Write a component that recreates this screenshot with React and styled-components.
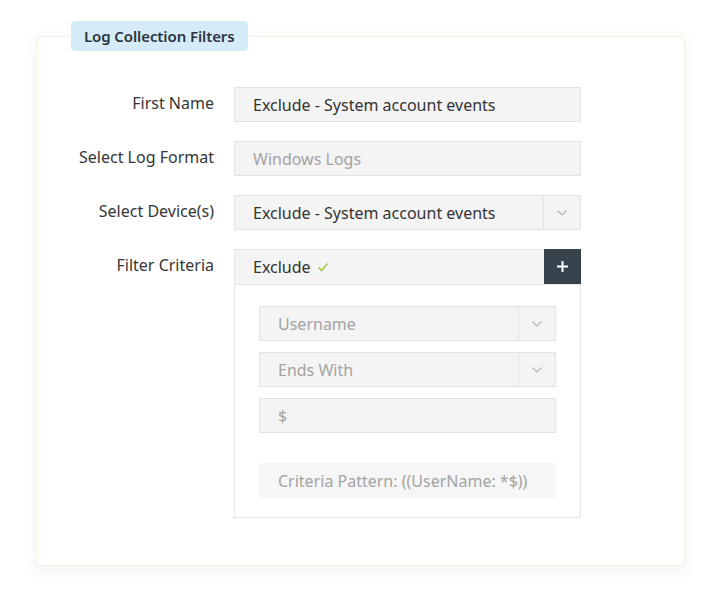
import React from 'react';
import styled, { createGlobalStyle } from 'styled-components';

const GlobalStyle = createGlobalStyle`
  html, body {
    margin: 0;
    padding: 0;
    background: #ffffff;
    font-family: 'Noto Sans', 'Open Sans', sans-serif;
  }
`;

const Page = styled.div`
  width: 720px;
  height: 602px;
  padding: 36px 0 0 36px;
  box-sizing: border-box;
`;

const Card = styled.section`
  position: relative;
  width: 649px;
  height: 530px;
  box-sizing: border-box;
  border: 1px solid #f7f1e2;
  border-radius: 3px;
  background: #fff;
  box-shadow: 0 4px 14px rgba(190, 185, 220, 0.22);
  padding: 50px 0 0 23px;
`;

const Badge = styled.div`
  position: absolute;
  top: -16px;
  left: 34px;
  height: 30px;
  padding: 0 13px;
  display: flex;
  align-items: center;
  background: #d5ebf8;
  border-radius: 4px;
  color: #2c3440;
  font-size: 15px;
  font-weight: 600;
  letter-spacing: -0.1px;
`;

const Form = styled.div`
  display: grid;
  grid-template-columns: 154px 347px;
  column-gap: 20px;
  row-gap: 19px;
  align-items: start;
`;

const Label = styled.label`
  text-align: right;
  font-size: 16px;
  color: #363636;
  line-height: 33px;
`;

const Field = styled.div`
  display: flex;
  align-items: stretch;
  height: 35px;
  box-sizing: border-box;
  background: ${(p) => (p.$flat ? '#f6f6f6' : '#f4f4f4')};
  border: 1px solid ${(p) => (p.$flat ? '#f6f6f6' : '#e3e3e3')};
`;

const FieldText = styled.div`
  flex: 1;
  display: flex;
  align-items: center;
  padding-left: 18px;
  font-size: 16px;
  color: ${(p) => (p.$muted ? '#a3a3a3' : '#333')};
  white-space: nowrap;
`;

const Caret = styled.div`
  width: 36px;
  display: flex;
  align-items: center;
  justify-content: center;
  border-left: 1px solid #e3e3e3;
`;

const FilterBox = styled.div`
  border: 1px solid #e6e6e6;
  box-sizing: border-box;
  height: 269px;
`;

const FilterHead = styled.div`
  display: flex;
  height: 34px;
  background: #f4f4f4;
  border-bottom: 1px solid #e6e6e6;
`;

const HeadText = styled.div`
  flex: 1;
  display: flex;
  align-items: center;
  gap: 6px;
  padding-left: 18px;
  font-size: 16px;
  color: #333;
`;

const PlusButton = styled.button`
  width: 37px;
  margin: -1px -1px 0 0;
  height: 35px;
  border: none;
  background: #36424c;
  display: flex;
  align-items: center;
  justify-content: center;
  padding: 0;
`;

const FilterBody = styled.div`
  padding: 21px 24px 0 24px;
  display: flex;
  flex-direction: column;
  gap: 11px;
`;

const Spacer = styled.div`
  height: 8px;
`;

const Chevron = () => (
  <svg width="12" height="8" viewBox="0 0 12 8">
    <path d="M1.5 1.5 L6 6 L10.5 1.5" fill="none" stroke="#b3b3b3" strokeWidth="1.2" />
  </svg>
);

const Check = () => (
  <svg width="12" height="10" viewBox="0 0 12 10">
    <path d="M1.5 5.5 L4.5 8.5 L10.5 1.5" fill="none" stroke="#a8c94a" strokeWidth="1.6" />
  </svg>
);

const Plus = () => (
  <svg width="13" height="13" viewBox="0 0 13 13">
    <path d="M6.5 1 V12 M1 6.5 H12" stroke="#fff" strokeWidth="2" />
  </svg>
);

const App = () => (
  <Page>
    <GlobalStyle />
    <Card>
      <Badge>Log Collection Filters</Badge>
      <Form>
        <Label>First Name</Label>
        <Field>
          <FieldText>Exclude - System account events</FieldText>
        </Field>

        <Label>Select Log Format</Label>
        <Field>
          <FieldText $muted>Windows Logs</FieldText>
        </Field>

        <Label>Select Device(s)</Label>
        <Field>
          <FieldText>Exclude - System account events</FieldText>
          <Caret><Chevron /></Caret>
        </Field>

        <Label>Filter Criteria</Label>
        <FilterBox>
          <FilterHead>
            <HeadText>Exclude <Check /></HeadText>
            <PlusButton><Plus /></PlusButton>
          </FilterHead>
          <FilterBody>
            <Field>
              <FieldText $muted>Username</FieldText>
              <Caret><Chevron /></Caret>
            </Field>
            <Field>
              <FieldText $muted>Ends With</FieldText>
              <Caret><Chevron /></Caret>
            </Field>
            <Field>
              <FieldText $muted>$</FieldText>
            </Field>
            <Spacer />
            <Field $flat>
              <FieldText $muted>Criteria Pattern: ((UserName: *$))</FieldText>
            </Field>
          </FilterBody>
        </FilterBox>
      </Form>
    </Card>
  </Page>
);

export default App;
